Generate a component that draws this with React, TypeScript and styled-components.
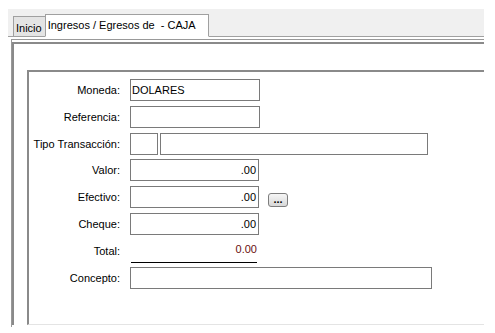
import React from "react";
import styled, { createGlobalStyle } from "styled-components";

const Global = createGlobalStyle`
  html, body { margin: 0; padding: 0; background: #ffffff; }
  body { font-family: "Liberation Sans", Arial, sans-serif; width: 495px; height: 333px; overflow: hidden; }
`;

const Window = styled.div`
  width: 484px;
  padding-top: 9px;
  overflow: hidden;
`;

const TabStrip = styled.div`
  margin-left: 8px;
  height: 28px;
  background: #f0f0f0;
  display: flex;
  align-items: flex-end;
  padding-left: 5px;
  border-bottom: 1px solid #a0a0a0;
  box-sizing: border-box;
`;

const Tab = styled.div<{ $active?: boolean }>`
  box-sizing: border-box;
  height: ${(p) => (p.$active ? 23 : 20)}px;
  margin-bottom: ${(p) => (p.$active ? -1 : 0)}px;
  padding: ${(p) => (p.$active ? "3px 12px 0 2px" : "4px 3px 0 2px")};
  background: ${(p) => (p.$active ? "#ffffff" : "#e4e4e4")};
  border: 1px solid #a0a0a0;
  border-bottom: ${(p) => (p.$active ? "1px solid #ffffff" : "none")};
  ${(p) => (p.$active ? "" : "border-right: none;")}
  font-size: 11px;
  line-height: 14px;
  color: #000;
  white-space: nowrap;
`;

const Frame = styled.div`
  margin-left: 11px;
  margin-top: 2px;
  border-top: 1px solid #999999;
  border-left: 1px solid #999999;
  height: 288px;
  box-sizing: border-box;
`;

const Panel = styled.div`
  margin-top: 2px;
  border-top: 2px solid #8a8a8a;
  border-left: 2px solid #8a8a8a;
  height: 283px;
  padding: 26px 0 0 13px;
  box-sizing: border-box;
`;

const GroupBox = styled.div`
  border-top: 2px solid #8a8a8a;
  border-left: 2px solid #8a8a8a;
  border-bottom: 1px solid #e4e4e4;
  height: 255px;
  box-sizing: border-box;
  padding-top: 7px;
  display: grid;
  grid-template-columns: 91px auto;
  grid-auto-rows: min-content;
  column-gap: 10px;
  align-items: center;
  align-content: start;
`;

const Label = styled.div<{ $h?: number }>`
  font-size: 11px;
  color: #000;
  text-align: right;
  height: ${(p) => p.$h ?? 27}px;
  line-height: 22px;
`;

const Cell = styled.div<{ $h?: number }>`
  display: flex;
  align-items: flex-start;
  gap: 2px;
  height: ${(p) => p.$h ?? 27}px;
`;

const Input = styled.div<{ $w: number; $right?: boolean }>`
  box-sizing: border-box;
  width: ${(p) => p.$w}px;
  height: 22px;
  border: 1px solid #7a7a7a;
  background: #fff;
  font-size: 11px;
  line-height: 20px;
  padding: 0 2px 0 1px;
  text-align: ${(p) => (p.$right ? "right" : "left")};
  color: #000;
`;

const DotsButton = styled.div`
  box-sizing: border-box;
  width: 20px;
  height: 14px;
  margin: 7px 0 0 7px;
  border: 1px solid #7d7d7d;
  border-radius: 3px;
  background: linear-gradient(#f6f6f6, #d8d8d8);
  font-size: 11px;
  font-weight: bold;
  line-height: 10px;
  text-align: center;
  color: #000;
`;

const TotalValue = styled.div`
  width: 126px;
  margin-left: 1px;
  box-sizing: border-box;
  font-size: 11px;
  line-height: 14px;
  text-align: right;
  color: #6a1010;
  padding-top: 2px;
  height: 23px;
  border-bottom: 1px solid #000;
`;

export default function App() {
  return (
    <>
      <Global />
      <Window>
        <TabStrip>
          <Tab>Inicio</Tab>
          <Tab $active>Ingresos / Egresos de&nbsp; - CAJA</Tab>
        </TabStrip>
        <Frame>
          <Panel>
            <GroupBox>
              <Label>Moneda:</Label>
              <Cell>
                <Input $w={130}>DOLARES</Input>
              </Cell>
              <Label>Referencia:</Label>
              <Cell>
                <Input $w={130} />
              </Cell>
              <Label $h={26}>Tipo Transacción:</Label>
              <Cell $h={26}>
                <Input $w={28} />
                <Input $w={268} />
              </Cell>
              <Label>Valor:</Label>
              <Cell>
                <Input $w={129} $right>.00</Input>
              </Cell>
              <Label>Efectivo:</Label>
              <Cell>
                <Input $w={129} $right>.00</Input>
                <DotsButton>...</DotsButton>
              </Cell>
              <Label>Cheque:</Label>
              <Cell>
                <Input $w={129} $right>.00</Input>
              </Cell>
              <Label $h={27}>Total:</Label>
              <Cell $h={27}>
                <TotalValue>0.00</TotalValue>
              </Cell>
              <Label>Concepto:</Label>
              <Cell>
                <Input $w={302} />
              </Cell>
            </GroupBox>
          </Panel>
        </Frame>
      </Window>
    </>
  );
}
